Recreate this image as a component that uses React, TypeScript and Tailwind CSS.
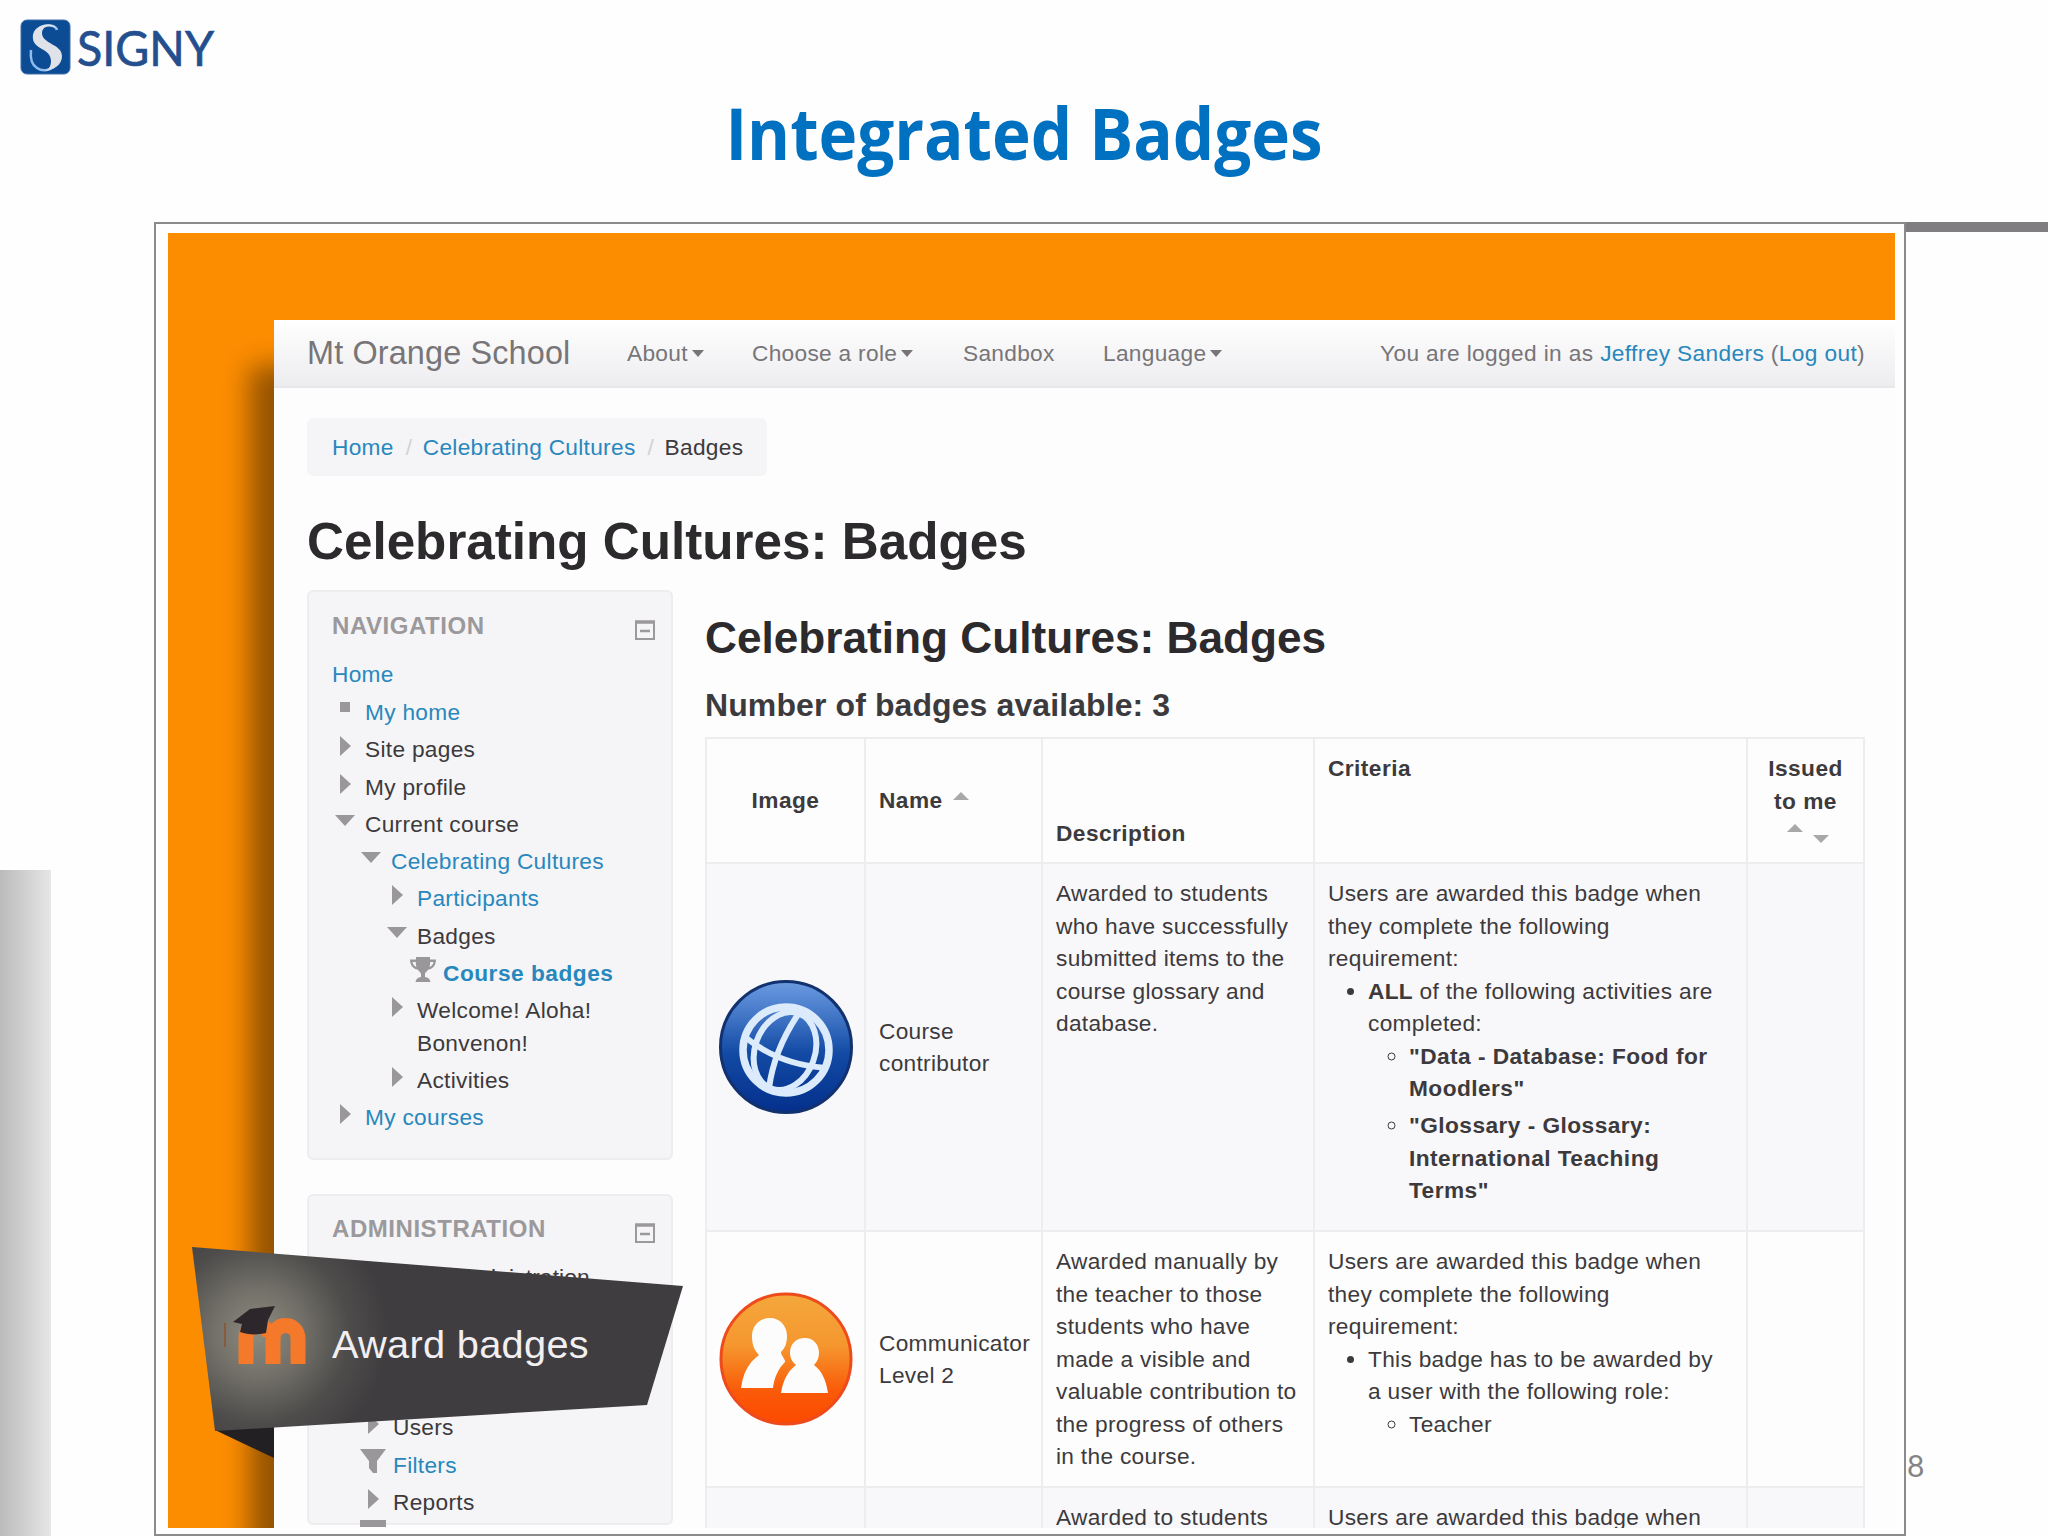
import type { ReactNode } from 'react';
import clsx from 'clsx';

type TreeIcon = 'square' | 'closed' | 'open' | 'trophy' | 'filter' | 'bar';

interface TreeItem {
  label: string;
  level: number;
  icon?: TreeIcon;
  link?: boolean;
  bold?: boolean;
}

interface BadgeRow {
  id: string;
  image?: ReactNode;
  name: string;
  description: string;
  criteria?: ReactNode;
}

const LEVEL_PADDING = ['pl-0', 'pl-[26px]', 'pl-[52px]', 'pl-[78px]'];

const navigationItems: TreeItem[] = [
  { label: 'My home', level: 0, icon: 'square', link: true },
  { label: 'Site pages', level: 0, icon: 'closed' },
  { label: 'My profile', level: 0, icon: 'closed' },
  { label: 'Current course', level: 0, icon: 'open' },
  { label: 'Celebrating Cultures', level: 1, icon: 'open', link: true },
  { label: 'Participants', level: 2, icon: 'closed', link: true },
  { label: 'Badges', level: 2, icon: 'open' },
  { label: 'Course badges', level: 3, icon: 'trophy', link: true, bold: true },
  { label: 'Welcome! Aloha! Bonvenon!', level: 2, icon: 'closed' },
  { label: 'Activities', level: 2, icon: 'closed' },
  { label: 'My courses', level: 0, icon: 'closed', link: true },
];

const administrationItems: TreeItem[] = [
  { label: 'Users', level: 1, icon: 'closed' },
  { label: 'Filters', level: 1, icon: 'filter', link: true },
  { label: 'Reports', level: 1, icon: 'closed' },
];

function TreeGlyph({ icon }: { icon?: TreeIcon }) {
  return (
    <svg viewBox="0 0 26 26" className="h-[26px] w-[26px]" fill="#999799">
      {icon === 'square' && <rect x="8" y="6" width="10" height="10" />}
      {icon === 'closed' && <path d="M8 3 L19 13 L8 23 Z" />}
      {icon === 'open' && <path d="M3 7 H23 L13 18 Z" />}
      {icon === 'trophy' && (
        <path d="M6 0 H20 V2.500 H26 C26 8 23 12 18.500 12.500 C17 14.500 15 15.500 15 17 V20 C18 20.500 20 22 20.500 25 H5.500 C6 22 8 20.500 11 20 V17 C11 15.500 9 14.500 7.500 12.500 C3 12 0 8 0 2.500 H6 Z M2.500 5 C3 7.500 4.500 9.500 6.500 10 C6 8.500 5.800 7 5.800 5 Z M23.500 5 H20.200 C20.200 7 20 8.500 19.500 10 C21.500 9.500 23 7.500 23.500 5 Z" />
      )}
      {icon === 'filter' && <path d="M0 0 H26 L17 12 V24 H13 L9 19 V12 Z" />}
      {icon === 'bar' && <rect y="0" width="26" height="7" />}
    </svg>
  );
}

function TreeRow({ item }: { item: TreeItem }) {
  return (
    <li className={clsx('mb-[4.900px] flex', LEVEL_PADDING[item.level])}>
      <span className="mr-[7px] w-[26px] shrink-0">
        <TreeGlyph icon={item.icon} />
      </span>
      <span
        className={clsx(
          item.link ? 'text-[#2888bd]' : 'text-[#3c3a3c]',
          item.bold && 'font-bold tracking-[0.500px]',
        )}
      >
        {item.label}
      </span>
    </li>
  );
}

function BlockHeading({ children }: { children: ReactNode }) {
  return (
    <div className="flex items-start justify-between pr-[15px]">
      <h2 className="text-[24px] leading-8 font-bold tracking-[0.550px] text-[#9b999b]">{children}</h2>
      <svg viewBox="0 0 22 22" className="mt-[9px] h-[22px] w-[22px]" fill="none" stroke="#9b999b">
        <path d="M1 3 H21" strokeWidth="3.500" />
        <path d="M2 3 V20 H20 V3" strokeWidth="2" />
        <path d="M6 12 H16" strokeWidth="2.500" />
      </svg>
    </div>
  );
}

function Caret() {
  return <span className="ml-1 border-x-[6px] border-t-[7px] border-x-transparent border-t-[#777577]" />;
}

function GlobeBadge() {
  return (
    <svg viewBox="0 0 134 134" className="mx-auto block h-[134px] w-[134px]">
      <defs>
        <linearGradient id="globe" x1="0" y1="0" x2="0" y2="1">
          <stop offset="0" stopColor="#6b9ae0" />
          <stop offset="0.250" stopColor="#4478c8" />
          <stop offset="0.550" stopColor="#124aa4" />
          <stop offset="1" stopColor="#04308c" />
        </linearGradient>
      </defs>
      <circle cx="67" cy="67" r="65.500" fill="url(#globe)" stroke="#12316f" strokeWidth="3" />
      <g fill="none" stroke="#dcebfb">
        <circle cx="67" cy="70" r="43" strokeWidth="7.500" />
        <ellipse cx="66" cy="71" rx="30" ry="40" transform="rotate(20 66 71)" strokeWidth="6" />
        <path d="M80 33 C67 52 54 78 50 108" strokeWidth="6" />
        <path d="M26 57 C48 75 76 86 108 88" strokeWidth="6" />
      </g>
    </svg>
  );
}

function PeopleBadge() {
  return (
    <svg viewBox="0 0 134 134" className="mx-auto block h-[134px] w-[134px]">
      <defs>
        <linearGradient id="people" x1="0" y1="0" x2="0" y2="1">
          <stop offset="0" stopColor="#f4a83c" />
          <stop offset="0.400" stopColor="#f5962e" />
          <stop offset="0.750" stopColor="#fa5a08" />
          <stop offset="1" stopColor="#fc4a00" />
        </linearGradient>
      </defs>
      <circle cx="67" cy="67" r="65" fill="url(#people)" stroke="#ee4a1c" strokeWidth="3" />
      <g fill="#fdfcfd">
        <path d="M51 26 C61 26 68 34 68 44 C68 51 66 56 62 60 C62 64 66 66 66 70 C59 77 55 86 54 96 H22 C24 82 29 71 40 63 C35 58 33 52 33 44 C33 34 40 26 51 26 Z" />
        <path d="M86 46 C94 46 100 52 100 61 C100 66 98 70 95 73 C103 79 107 88 109 101 H62 C64 88 69 79 77 73 C73 70 71 66 71 61 C71 52 77 46 86 46 Z" />
      </g>
    </svg>
  );
}

function RequirementIntro() {
  return <p>Users are awarded this badge when they complete the following requirement:</p>;
}

const badges: BadgeRow[] = [
  {
    id: 'contributor',
    image: <GlobeBadge />,
    name: 'Course contributor',
    description: 'Awarded to students who have successfully submitted items to the course glossary and database.',
    criteria: (
      <ul className="list-disc pl-[40px]">
        <li>
          <b>ALL</b> of the following activities are completed:
          <ul className="list-[circle] pl-[41px] font-bold tracking-[0.450px]">
            <li className="mb-[4.900px]">"Data - Database: Food for Moodlers"</li>
            <li>"Glossary - Glossary: International Teaching Terms"</li>
          </ul>
        </li>
      </ul>
    ),
  },
  {
    id: 'communicator',
    image: <PeopleBadge />,
    name: 'Communicator Level 2',
    description:
      'Awarded manually by the teacher to those students who have made a visible and valuable contribution to the progress of others in the course.',
    criteria: (
      <ul className="list-disc pl-[40px]">
        <li>
          This badge has to be awarded by a user with the following role:
          <ul className="list-[circle] pl-[41px]">
            <li>Teacher</li>
          </ul>
        </li>
      </ul>
    ),
  },
  { id: 'third', name: '', description: 'Awarded to students' },
];

const ROW_HEIGHTS = ['h-[368px]', 'h-[256px]', 'h-[368px]'];

function SignyLogo() {
  return (
    <svg viewBox="0 0 220 60" className="h-[60px] w-[220px]">
      <rect x="1" y="1" width="49" height="54" rx="6" fill="#0c4c94" stroke="#3c6fac" strokeWidth="1" />
      <path
        d="M37 11 C35 3 14 5 14 18 C14 30 33 28 36 40 C38 50 24 54 17 49 C12 46 10 40 11 31"
        fill="none"
        stroke="#8fbdf0"
        strokeWidth="2.500"
      />
      <path
        d="M37 10 C33 2 13 5 13 18 C13 31 31 29 31 42 C31 48 28 51 24 52 C34 51 42 46 42 37 C42 25 22 25 22 14 C22 7 31 5 37 10 Z"
        fill="#dfe2e8"
      />
      <text
        x="57"
        y="46.500"
        textLength="137"
        lengthAdjust="spacingAndGlyphs"
        fill="#234f8f"
        stroke="#234f8f"
        strokeWidth="0.700"
        className="font-[Lato,sans-serif] text-[49px]"
      >
        SIGNY
      </text>
    </svg>
  );
}

function AwardRibbon() {
  return (
    <svg viewBox="0 0 520 220" className="absolute top-[1014px] left-[12px] h-[220px] w-[520px]">
      <defs>
        <radialGradient id="glow" gradientUnits="userSpaceOnUse" cx="78" cy="86" r="130">
          <stop offset="0" stopColor="#8e8c80" />
          <stop offset="0.350" stopColor="#716f67" />
          <stop offset="0.700" stopColor="#4e4c4b" />
          <stop offset="1" stopColor="#403d40" />
        </radialGradient>
      </defs>
      <path d="M35 183 L94 178 V211 Z" fill="#232024" />
      <path d="M12 0 L503 39 L467 158 L35 184 Z" fill="url(#glow)" />
      <g fill="none" stroke="#f4792b" strokeWidth="15">
        <path d="M66 117 V90 C66 76 90 76 90 90" />
        <path d="M93 117 V92 C93 74 118 74 118 92 V117" />
      </g>
      <path d="M45 76 V100" stroke="#8a5a3c" strokeWidth="2" />
      <path d="M53 75 L70 62 L95 59 L88 73 L86 86 C78 88 68 88 60 85 L62 77 Z" fill="#2d272c" />
      <text
        x="152"
        y="111"
        textLength="257"
        lengthAdjust="spacingAndGlyphs"
        fill="#f1eff1"
        className="font-['Liberation_Sans',Arial,sans-serif] text-[39.600px]"
      >
        Award badges
      </text>
    </svg>
  );
}

function SiteNav() {
  return (
    <nav className="flex h-[68px] items-center border-b-2 border-[#e8e7ea] bg-gradient-to-b from-white to-[#edecef] pr-[30px] pl-[33px] text-[#777577]">
      <span className="w-[320px] text-[32.400px] tracking-[0.150px]">Mt Orange School</span>
      <span className="flex w-[125px] items-center">
        About
        <Caret />
      </span>
      <span className="flex w-[211px] items-center">
        Choose a role
        <Caret />
      </span>
      <span className="w-[140px]">Sandbox</span>
      <span className="flex items-center">
        Language
        <Caret />
      </span>
      <span className="ml-auto tracking-[0.370px]">
        You are logged in as <span className="text-[#2888bd]">Jeffrey Sanders</span> (
        <span className="text-[#2888bd]">Log out</span>)
      </span>
    </nav>
  );
}

function Breadcrumb() {
  return (
    <div className="mt-[30px] flex h-[58px] w-[460px] items-center rounded-md bg-[#f5f4f7] pl-[25px] text-[#2888bd]">
      <span>Home</span>
      <span className="w-[29px] pl-3 text-[#d4d2d4]">/</span>
      <span>Celebrating Cultures</span>
      <span className="w-[29px] pl-3 text-[#d4d2d4]">/</span>
      <span className="text-[#3c3a3c]">Badges</span>
    </div>
  );
}

function BadgeTable() {
  return (
    <table className="mt-[12px] w-[1158px] table-fixed border-collapse text-left leading-[32.500px] [&_td]:border-2 [&_td]:border-[#eeecef] [&_td]:p-[13px] [&_th]:border-2 [&_th]:border-[#eeecef] [&_th]:p-[13px] [&_th]:tracking-[0.450px]">
      <colgroup>
        <col className="w-[159px]" />
        <col className="w-[177px]" />
        <col className="w-[272px]" />
        <col className="w-[433px]" />
        <col className="w-[117px]" />
      </colgroup>
      <thead>
        <tr className="h-[125px]">
          <th className="text-center">Image</th>
          <th>
            <span className="flex items-center">
              Name
              <span className="mb-2.5 ml-2.5 border-x-8 border-b-8 border-x-transparent border-b-[#a9a7a9]" />
            </span>
          </th>
          <th className="align-bottom">Description</th>
          <th className="align-top">Criteria</th>
          <th className="py-0! text-center align-top">
            <span className="block pt-[13px]">Issued to me</span>
            <span className="mt-[7px] flex h-[18px] justify-center gap-2.5 pl-1">
              <span className="h-0 border-x-8 border-b-8 border-x-transparent border-b-[#a9a7a9]" />
              <span className="mt-[11px] h-0 border-x-8 border-t-8 border-x-transparent border-t-[#a9a7a9]" />
            </span>
          </th>
        </tr>
      </thead>
      <tbody>
        {badges.map((b, i) => (
          <tr key={b.id} className={clsx(ROW_HEIGHTS[i], i % 2 === 0 && 'bg-[#f8f7fa]')}>
            <td className="px-0!">{b.image}</td>
            <td className="pr-0!">{b.name}</td>
            <td className="pr-[10px]! align-top">{b.description}</td>
            <td className="pr-[20px]! align-top">
              <RequirementIntro />
              {b.criteria}
            </td>
            <td />
          </tr>
        ))}
      </tbody>
    </table>
  );
}

function MoodlePage() {
  return (
    <div className="h-[1208px] bg-[#fdfdfd] shadow-[-24px_46px_26px_rgba(0,0,0,0.42)]">
      <SiteNav />
      <div className="pl-[33px]">
        <Breadcrumb />
        <h1 className="mt-[33px] text-[51.200px] leading-[65px] font-bold tracking-normal text-[#2c2a2c]">
          Celebrating Cultures: Badges
        </h1>
        <div className="mt-4 flex gap-8">
          <aside className="w-[366px] shrink-0">
            <section className="h-[570px] rounded-md border-2 border-[#edecef] bg-[#f5f4f7] pt-[18px] pl-[23px]">
              <BlockHeading>NAVIGATION</BlockHeading>
              <p className="mt-4 mb-[5.500px] text-[#2888bd]">Home</p>
              <ul className="pr-12">
                {navigationItems.map(item => (
                  <TreeRow key={item.label} item={item} />
                ))}
              </ul>
            </section>
            <section className="mt-[34px] h-[331px] rounded-md border-2 border-[#edecef] bg-[#f5f4f7] pt-[17px] pl-[23px]">
              <BlockHeading>ADMINISTRATION</BlockHeading>
              <p className="mt-4 pl-[34px] tracking-[0.150px]">Course administration</p>
              <ul className="mt-[118px] pl-[2px]">
                {administrationItems.map(item => (
                  <TreeRow key={item.label} item={item} />
                ))}
                <li className="-mt-[3px] pl-[26px]">
                  <TreeGlyph icon="bar" />
                </li>
              </ul>
            </section>
          </aside>
          <main className="pt-[22px]">
            <h2 className="text-[44.200px] leading-[52px] font-bold tracking-normal text-[#2c2a2c]">
              Celebrating Cultures: Badges
            </h2>
            <h3 className="mt-[21px] text-[32px] leading-10 font-bold tracking-[0.100px]">
              Number of badges available: 3
            </h3>
            <BadgeTable />
          </main>
        </div>
      </div>
    </div>
  );
}

export default function App() {
  return (
    <div className="flex h-[1536px] w-[2048px] flex-col overflow-hidden bg-[#fefefe]">
      <header className="h-[222px] pt-[19px] pl-[20px]">
        <SignyLogo />
        <h1 className="mt-[4px] -ml-[20px] origin-center scale-x-[0.910] text-center font-['Open_Sans',sans-serif] text-[72px] leading-[98px] font-bold text-[#0070c0]">
          Integrated Badges
        </h1>
      </header>

      <div className="flex min-h-0 flex-1">
        <div className="w-[154px] pt-[648px]">
          <div className="h-full w-[51px] bg-gradient-to-r from-[#bbb] to-[#e6e6e6]" />
        </div>

        <div className="w-[1752px] border-2 border-[#8c8a8c] bg-[#fefefe] px-[12px] pt-[9px] pr-[9px] pb-[4px]">
          <div className="relative h-[1295px] overflow-hidden bg-[#fd8d00] pt-[87px] pl-[106px] font-['Liberation_Sans',Arial,sans-serif] text-[22.700px] leading-[32.400px] tracking-[0.300px] text-[#3c3a3c]">
            <MoodlePage />
            <AwardRibbon />
          </div>
        </div>

        <div className="flex flex-1 flex-col">
          <div className="h-[10px] bg-[#817e81]" />
          <span className="mt-[1213px] pl-px font-[Lato,sans-serif] text-[30px] leading-10 text-[#858385]">8</span>
        </div>
      </div>
    </div>
  );
}
